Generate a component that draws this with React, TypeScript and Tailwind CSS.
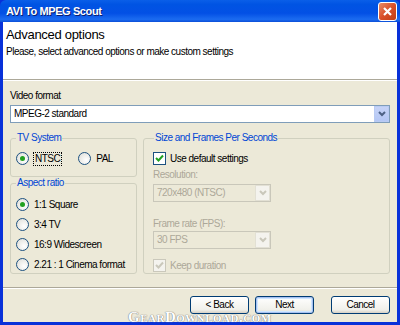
import React from 'react';

const font = "font-['Liberation_Sans',Tahoma,sans-serif]";
const txt = 'text-[10px] leading-[12px] tracking-[-0.5px] whitespace-nowrap';

function Radio({ checked, label, focus }: { checked?: boolean; label: string; focus?: boolean }) {
  return (
    <div className="flex items-center gap-[5px] h-[13px]">
      <span className="w-[13px] h-[13px] rounded-full border border-[#1c5180] bg-[radial-gradient(circle_at_65%_65%,#ffffff,#dcdcd6)] flex items-center justify-center shrink-0">
        {checked && <span className="w-[5px] h-[5px] rounded-full bg-[#21a121]" />}
      </span>
      <span className={`${txt} text-black ${focus ? 'outline outline-1 outline-dotted outline-black px-[1px]' : ''}`}>{label}</span>
    </div>
  );
}

function Check({ checked, disabled, label }: { checked?: boolean; disabled?: boolean; label: string }) {
  return (
    <div className="flex items-center gap-[4px] h-[13px]">
      <span className={`w-[13px] h-[13px] border flex items-center justify-center shrink-0 ${disabled ? 'border-[#cac8bb] bg-[#f4f3ee]' : 'border-[#1c5180] bg-white'}`}>
        {checked && (
          <svg width="9" height="9" viewBox="0 0 9 9">
            <path d="M1 4 L3.5 6.5 L8 1.5" stroke={disabled ? '#cac8bb' : '#21a121'} strokeWidth="2" fill="none" />
          </svg>
        )}
      </span>
      <span className={`${txt} ${disabled ? 'text-[#aca899]' : 'text-black'}`}>{label}</span>
    </div>
  );
}

function Arrow({ color }: { color: string }) {
  return (
    <svg width="8" height="6" viewBox="0 0 8 6">
      <path d="M1 1 L4 4 L7 1" stroke={color} strokeWidth="2" fill="none" />
    </svg>
  );
}

function Select({ value, disabled, className }: { value: string; disabled?: boolean; className?: string }) {
  return (
    <div className={`h-[18px] border flex items-center ${disabled ? 'border-[#c9c7ba] bg-[#ece9d8]' : 'border-[#7f9db9] bg-white'} ${className ?? ''}`}>
      <span className={`flex-1 pl-[3px] ${txt} ${disabled ? 'text-[#aca899]' : 'text-black'}`}>{value}</span>
      <span className={`w-[15px] h-[16px] flex items-center justify-center ${disabled ? 'bg-[#f4f3ee] border border-[#e2e0d4]' : 'bg-[linear-gradient(180deg,#c6d3f7,#b4c7f5)] border border-[#b9cbf3]'}`}>
        <Arrow color={disabled ? '#c9c7ba' : '#4d6185'} />
      </span>
    </div>
  );
}

function Group({ title, className, children }: { title: string; className?: string; children: React.ReactNode }) {
  return (
    <fieldset className={`border border-[#d0d0bf] rounded-[3px] px-[4px] ${className ?? ''}`}>
      <legend className={`${txt} text-[#0046d5] px-[1px] ml-[1px]`}>{title}</legend>
      {children}
    </fieldset>
  );
}

function Button({ label, focused }: { label: string; focused?: boolean }) {
  return (
    <button className={`w-[59px] h-[18px] rounded-[3px] border border-[#003c74] bg-[linear-gradient(180deg,#ffffff,#f0f0ea_80%,#d6d0c5)] ${txt} text-black ${focused ? 'shadow-[inset_0_0_0_1px_#a8c0f0,inset_0_0_0_2px_#cee7ff]' : ''}`}>
      {label}
    </button>
  );
}

export default function App() {
  return (
    <div className={`w-[400px] h-[325px] overflow-hidden flex flex-col bg-[#0831d9] ${font}`}>
      <div className="h-[22px] shrink-0 flex items-center justify-between pl-[6px] pr-[3px] bg-[linear-gradient(180deg,#0a5fe8,#0054e3_20%,#0350e5_60%,#1b6bf0_88%,#0b4fd8)] rounded-t-[6px]">
        <span className="text-white font-bold text-[11px] leading-[14px] [text-shadow:1px_1px_0_#0a1e6e] tracking-[-0.4px]">AVI To MPEG Scout</span>
        <span className="w-[19px] h-[19px] rounded-[3px] border border-white bg-[linear-gradient(135deg,#e88c68,#d9502a_50%,#c03d14)] flex items-center justify-center">
          <svg width="11" height="11" viewBox="0 0 11 11">
            <path d="M2 2 L9 9 M9 2 L2 9" stroke="#ffffff" strokeWidth="2.2" />
          </svg>
        </span>
      </div>
      <div className="flex-1 flex flex-col mx-[3px] mb-[3px] bg-[#ece9d8]">
        <div className="h-[58px] bg-white shrink-0 pl-[3px] pt-[5px] border-b border-[#aca899] shadow-[0_1px_0_#ffffff]">
          <div className="text-[13px] leading-[16px] tracking-[-0.3px] text-black">Advanced options</div>
          <div className={`${txt} text-black mt-[3px]`}>Please, select advanced options or make custom settings</div>
        </div>
        <div className="px-[7px] pt-[10px] flex flex-col">
          <div className={`${txt} text-black`}>Video format</div>
          <Select value="MPEG-2 standard" className="mt-[3px]" />
          <div className="flex gap-[6px] mt-[9px]">
            <div className="w-[127px] flex flex-col">
              <Group title="TV System" className="h-[45px]">
                <div className="flex gap-[17px] pl-[1px] pt-[8px]">
                  <Radio checked focus label="NTSC" />
                  <Radio label="PAL" />
                </div>
              </Group>
              <Group title="Aspect ratio" className="h-[97px]">
                <div className="flex flex-col gap-[7px] pl-[1px] pt-[9px]">
                  <Radio checked label="1:1 Square" />
                  <Radio label="3:4 TV" />
                  <Radio label="16:9 Widescreen" />
                  <Radio label="2.21 : 1 Cinema format" />
                </div>
              </Group>
            </div>
            <Group title="Size and Frames Per Seconds" className="flex-1 h-[142px] pl-[9px] pr-[8px]">
              <div className="pt-[8px]">
                <Check checked label="Use default settings" />
                <div className={`${txt} text-[#aca899] mt-[4px]`}>Resolution:</div>
                <Select disabled value="720x480 (NTSC)" className="w-[118px] mt-[3px]" />
                <div className={`${txt} text-[#aca899] mt-[16px]`}>Frame rate (FPS):</div>
                <Select disabled value="30 FPS" className="w-[118px] mt-[1px]" />
                <div className="mt-[10px]">
                  <Check checked disabled label="Keep duration" />
                </div>
              </div>
            </Group>
          </div>
        </div>
        <div className="mt-auto mb-[8px] flex flex-col">
          <div className="border-t border-[#aca899] shadow-[0_1px_0_#ffffff]" />
          <div className="flex justify-end gap-[6px] pr-[7px] pt-[8px] relative">
            <Button label="< Back" />
            <Button label="Next" focused />
            <span className="w-[5px]" />
            <Button label="Cancel" />
            <span className="absolute left-[125px] top-[22px] text-white text-[15px] leading-[14px] font-['Liberation_Serif',serif] font-bold tracking-[0.5px] [font-variant:small-caps] [text-shadow:0_0_1px_#777,0_0_1px_#777]">GearDownload.com</span>
          </div>
        </div>
      </div>
    </div>
  );
}
